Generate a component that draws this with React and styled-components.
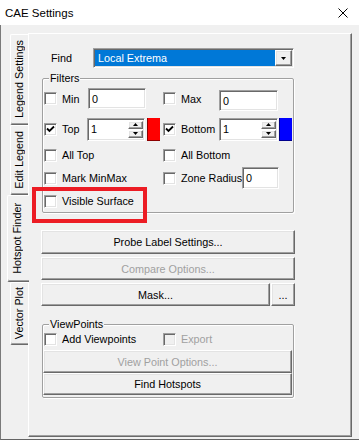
import React from "react";
import styled, { createGlobalStyle, css } from "styled-components";

const GlobalStyle = createGlobalStyle`
  html, body {
    margin: 0;
    padding: 0;
    background: #f0f0f0;
  }
  body {
    font-family: "Liberation Sans", Arial, sans-serif;
    font-size: 10.8px;
    color: #000;
  }
  * { box-sizing: border-box; }
`;

const sunken = css`
  border: 1px solid;
  border-color: #a0a0a0 #fff #fff #a0a0a0;
  box-shadow: inset 1px 1px 0 #696969, inset -1px -1px 0 #e3e3e3;
`;

const raised = css`
  border: 1px solid;
  border-color: #fff #696969 #696969 #fff;
  box-shadow: inset -1px -1px 0 #a0a0a0, inset 1px 1px 0 #e3e3e3;
  background: #f0f0f0;
`;

const Window = styled.div`
  width: 359px;
  height: 440px;
  display: flex;
  flex-direction: column;
  background: #f0f0f0;
`;

const TitleBar = styled.div`
  height: 25px;
  flex: none;
  background: #fff;
  display: flex;
  align-items: center;
  justify-content: space-between;
  padding: 0 11px 0 5px;
`;

const Title = styled.span`
  font-size: 11.5px;
`;

const Body = styled.div`
  flex: 1;
  display: flex;
  padding: 8px 7px 2px 6px;
  border-left: 1px solid #7a7a7a;
  border-bottom: 1px solid #646464;
`;

const TabStrip = styled.div`
  width: 21px;
  flex: none;
  display: flex;
  flex-direction: column;
  align-items: flex-end;
  padding-top: 1px;
`;

const Tab = styled.div`
  height: ${(p) => p.$h}px;
  width: ${(p) => (p.$active ? 22 : 18)}px;
  margin-right: ${(p) => (p.$active ? -1 : 0)}px;
  border-top: 1px solid #fff;
  border-left: 1px solid #fff;
  border-bottom: 1px solid #696969;
  box-shadow: inset 0 -1px 0 #a0a0a0;
  border-radius: 2px 0 0 2px;
  background: #f0f0f0;
  position: relative;
  z-index: ${(p) => (p.$active ? 1 : 0)};
  display: flex;
  align-items: center;
  justify-content: center;
  padding-right: ${(p) => (p.$active ? 3 : 0)}px;
`;

const TabLabel = styled.span`
  writing-mode: vertical-rl;
  transform: rotate(180deg);
  white-space: nowrap;
  line-height: 11px;
`;

const Panel = styled.div`
  flex: 1;
  border-top: 1px solid #fff;
  border-left: 1px solid #fff;
  border-right: 1px solid #696969;
  border-bottom: 1px solid #696969;
  box-shadow: inset -1px -1px 0 #a0a0a0;
  padding: 14px 0 0 12px;
  display: flex;
  flex-direction: column;
`;

const Content = styled.div`
  width: 254px;
  display: flex;
  flex-direction: column;
`;

const FindRow = styled.div`
  height: 20px;
  display: flex;
  align-items: center;
`;

const FindLabel = styled.span`
  width: 42px;
  margin-left: 10px;
`;

const Combo = styled.div`
  ${sunken};
  width: 201px;
  height: 20px;
  background: #fff;
  display: flex;
  padding: 1px;
`;

const ComboValue = styled.div`
  flex: 1;
  background: #0078d7;
  color: #fff;
  padding-left: 3px;
  display: flex;
  align-items: center;
`;

const DropButton = styled.div`
  ${raised};
  width: 17px;
  display: flex;
  align-items: center;
  justify-content: center;
`;

const GroupBox = styled.div`
  position: relative;
  margin-top: ${(p) => p.$mt}px;
  margin-left: 1px;
  width: 252px;
  height: ${(p) => p.$h}px;
  flex: none;
  border: 1px solid #a0a0a0;
  border-radius: 2px;
  box-shadow: inset 1px 1px 0 #fff, 1px 1px 0 #fff;
  padding: ${(p) => p.$pt}px 0 0 1px;
  display: flex;
  flex-direction: column;
`;

const GroupTitle = styled.span`
  position: absolute;
  left: 6px;
  top: -7px;
  line-height: 13px;
  padding: 0 1px;
  background: #f0f0f0;
`;

const Row = styled.div`
  position: relative;
  height: ${(p) => p.$h}px;
  flex: none;
  margin-top: ${(p) => p.$mt || 0}px;
  display: grid;
  grid-template-columns: 119px 1fr;
  align-items: center;
`;

const Field = styled.div`
  display: flex;
  align-items: center;
`;

const Box = styled.span`
  ${sunken};
  width: 13px;
  height: 13px;
  flex: none;
  margin-right: 5px;
  background: ${(p) => (p.$disabled ? "#f0f0f0" : "#fff")};
  display: flex;
  align-items: center;
  justify-content: center;
`;

const Label = styled.span`
  width: ${(p) => (p.$w ? `${p.$w}px` : "auto")};
  flex: none;
  white-space: nowrap;
  color: ${(p) => (p.$disabled ? "#a0a0a0" : "#000")};
`;

const Edit = styled.div`
  ${sunken};
  width: ${(p) => p.$w}px;
  height: ${(p) => p.$h}px;
  flex: none;
  margin-top: ${(p) => p.$mt || 0}px;
  background: #fff;
  display: flex;
  align-items: center;
  padding: 0 1px 0 3px;
`;

const EditText = styled.span`
  flex: 1;
`;

const Spinner = styled.div`
  width: 15px;
  align-self: stretch;
  display: flex;
  flex-direction: column;
  justify-content: center;
  gap: 1px;
  padding: 2px 0;
`;

const SpinButton = styled.div`
  ${raised};
  flex: 1;
  display: flex;
  align-items: center;
  justify-content: center;
`;

const Swatch = styled.span`
  width: 13px;
  height: 23px;
  flex: none;
  margin-left: ${(p) => p.$ml}px;
  background: ${(p) => p.$color};
  box-shadow: inset 1px -1px 0 rgba(0, 0, 0, 0.45);
`;

const Highlight = styled.div`
  position: absolute;
  left: -12px;
  top: -4px;
  width: 115px;
  height: 36px;
  border: 4px solid #ec1c24;
  pointer-events: none;
`;

const Button = styled.div`
  ${raised};
  height: ${(p) => p.$h || 23}px;
  margin-top: ${(p) => p.$mt || 0}px;
  width: ${(p) => (p.$w ? `${p.$w}px` : "auto")};
  flex: ${(p) => (p.$grow ? "1 1 auto" : "none")};
  display: flex;
  align-items: center;
  justify-content: center;
  color: ${(p) => (p.$disabled ? "#a0a0a0" : "#000")};
`;

const ButtonRow = styled.div`
  display: flex;
  gap: 1px;
  margin-top: ${(p) => p.$mt}px;
  height: 23px;
  flex: none;
`;

const GroupButtons = styled.div`
  display: flex;
  flex-direction: column;
  margin: 0 1px 0 -1px;
`;

function Arrow({ up }) {
  return (
    <svg width="5" height="3" viewBox="0 0 5 3">
      <path d={up ? "M0 3 L2.5 0 L5 3 Z" : "M0 0 L5 0 L2.5 3 Z"} fill="#000" />
    </svg>
  );
}

function Check({ checked, disabled }) {
  return (
    <Box $disabled={disabled}>
      {checked && (
        <svg width="9" height="8" viewBox="0 0 9 8">
          <path d="M1 3.5 L3.5 6 L8 1.5" fill="none" stroke="#000" strokeWidth="1.8" />
        </svg>
      )}
    </Box>
  );
}

function Spin({ w, value }) {
  return (
    <Edit $w={w} $h={23}>
      <EditText>{value}</EditText>
      <Spinner>
        <SpinButton>
          <Arrow up />
        </SpinButton>
        <SpinButton>
          <Arrow />
        </SpinButton>
      </Spinner>
    </Edit>
  );
}

const tabs = [
  { label: "Legend Settings", h: 91 },
  { label: "Edit Legend", h: 70 },
  { label: "Hotspot Finder", h: 87, active: true },
  { label: "Vector Plot", h: 63 },
];

export default function App() {
  return (
    <>
      <GlobalStyle />
      <Window>
        <TitleBar>
          <Title>CAE Settings</Title>
          <svg width="10" height="10" viewBox="0 0 10 10">
            <path d="M0.5 0.5 L9.5 9.5 M9.5 0.5 L0.5 9.5" stroke="#000" strokeWidth="1" />
          </svg>
        </TitleBar>
        <Body>
          <TabStrip>
            {tabs.map((t) => (
              <Tab key={t.label} $h={t.h} $active={t.active}>
                <TabLabel>{t.label}</TabLabel>
              </Tab>
            ))}
          </TabStrip>
          <Panel>
            <Content>
              <FindRow>
                <FindLabel>Find</FindLabel>
                <Combo>
                  <ComboValue>Local Extrema</ComboValue>
                  <DropButton>
                    <Arrow />
                  </DropButton>
                </Combo>
              </FindRow>

              <GroupBox $mt={10} $h={135} $pt={7}>
                <GroupTitle>Filters</GroupTitle>
                <Row $h={23}>
                  <Field>
                    <Check />
                    <Label $w={26}>Min</Label>
                    <Edit $w={58} $h={21}>0</Edit>
                  </Field>
                  <Field>
                    <Check />
                    <Label $w={38}>Max</Label>
                    <Edit $w={59} $h={21} $mt={4}>0</Edit>
                  </Field>
                </Row>
                <Row $h={24} $mt={8}>
                  <Field>
                    <Check checked />
                    <Label $w={25}>Top</Label>
                    <Spin w={58} value="1" />
                    <Swatch $color="#ff0000" $ml={2} />
                  </Field>
                  <Field>
                    <Check checked />
                    <Label $w={38}>Bottom</Label>
                    <Spin w={59} value="1" />
                    <Swatch $color="#0000ff" $ml={1} />
                  </Field>
                </Row>
                <Row $h={22} $mt={3}>
                  <Field>
                    <Check />
                    <Label>All Top</Label>
                  </Field>
                  <Field>
                    <Check />
                    <Label>All Bottom</Label>
                  </Field>
                </Row>
                <Row $h={22} $mt={1}>
                  <Field>
                    <Check />
                    <Label>Mark MinMax</Label>
                  </Field>
                  <Field>
                    <Check />
                    <Label $w={61}>Zone Radius</Label>
                    <Edit $w={37} $h={22}>0</Edit>
                  </Field>
                </Row>
                <Row $h={20} $mt={2}>
                  <Field>
                    <Check />
                    <Label>Visible Surface</Label>
                  </Field>
                  <Highlight />
                </Row>
              </GroupBox>

              <Button $mt={17} $h={24}>Probe Label Settings...</Button>
              <Button $mt={3} $disabled>Compare Options...</Button>
              <ButtonRow $mt={3}>
                <Button $grow>Mask...</Button>
                <Button $w={24}>...</Button>
              </ButtonRow>

              <GroupBox $mt={18} $h={74} $pt={4}>
                <GroupTitle>ViewPoints</GroupTitle>
                <Row $h={20}>
                  <Field>
                    <Check />
                    <Label>Add Viewpoints</Label>
                  </Field>
                  <Field>
                    <Check disabled />
                    <Label $disabled>Export</Label>
                  </Field>
                </Row>
                <GroupButtons>
                  <Button $mt={1} $disabled>View Point Options...</Button>
                  <Button $h={22}>Find Hotspots</Button>
                </GroupButtons>
              </GroupBox>
            </Content>
          </Panel>
        </Body>
      </Window>
    </>
  );
}
